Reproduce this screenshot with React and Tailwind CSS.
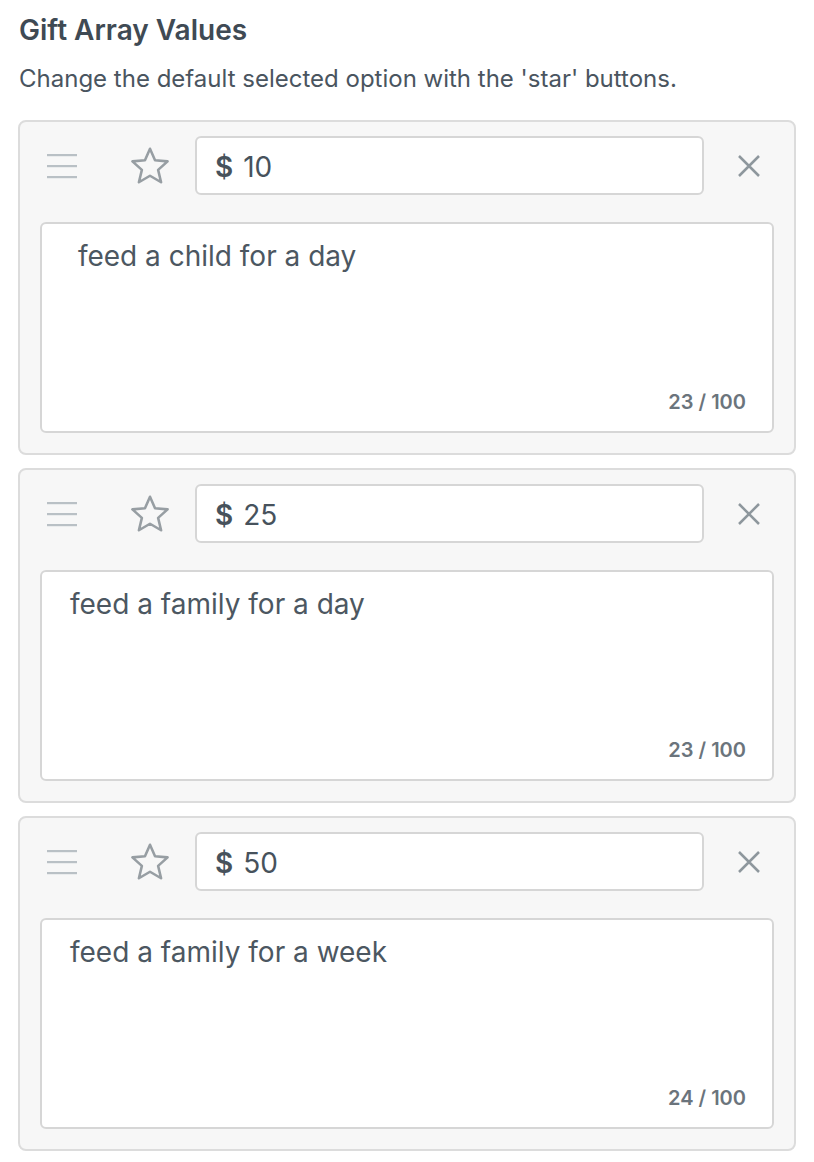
import React from "react";

const gifts = [
    { amount: "10", text: " feed a child for a day" },
    { amount: "25", text: "feed a family for a day" },
    { amount: "50", text: "feed a family for a week" },
];

function DragHandle() {
    return (
        <svg width="30" height="26" viewBox="0 0 30 26" className="text-[#b9c0c5]">
            <rect x="0" y="1" width="30" height="2.2" fill="currentColor" />
            <rect x="0" y="12" width="30" height="2.2" fill="currentColor" />
            <rect x="0" y="23" width="30" height="2.2" fill="currentColor" />
        </svg>
    );
}

function StarIcon() {
    return (
        <svg width="42" height="41" viewBox="0 0 24 24" fill="none" stroke="currentColor" strokeWidth="1.5" strokeLinejoin="round" className="text-[#979ea3]">
            <polygon points="12,2.2 14.94,8.96 22.3,9.6 16.75,14.55 18.49,21.8 12,18 5.51,21.8 7.25,14.55 1.7,9.6 9.06,8.96" />
        </svg>
    );
}

function CloseIcon() {
    return (
        <svg width="22" height="22" viewBox="0 0 22 22" fill="none" stroke="currentColor" strokeWidth="2.5" className="text-[#8e979d]">
            <path d="M1 1L21 21M21 1L1 21" />
        </svg>
    );
}

function GiftCard({ amount, text }) {
    return (
        <div className="border-2 border-[#dcdcdc] rounded-lg bg-[#f7f7f7] px-5 pt-[14px] pb-5">
            <div className="flex items-center h-[59px]">
                <div className="w-[87px] flex items-center pl-[7px]">
                    <DragHandle />
                </div>
                <div className="w-[68px] flex items-center pl-[2px]">
                    <StarIcon />
                </div>
                <div className="w-[509px] h-[59px] bg-white border-2 border-[#d6d6d6] rounded-md flex items-center pl-[18px] pt-[3px] text-[28px] text-[#47525c]">
                    <span className="font-semibold">$</span>
                    <span className="ml-[10px]">{amount}</span>
                </div>
                <div className="flex-1 flex items-center justify-center pl-5">
                    <CloseIcon />
                </div>
            </div>
            <div className="mt-[27px] h-[211px] bg-white border-2 border-[#d6d6d6] rounded-md flex flex-col pl-[28px] pr-[26px] pt-[14px] pb-[15px]">
                <div className="text-[28px] leading-[36px] text-[#4c5761] whitespace-pre">{text}</div>
                <div className="mt-auto text-right text-[20px] font-semibold text-[#6b747c] leading-[28px]">
                    {text.length} / 100
                </div>
            </div>
        </div>
    );
}

export default function App() {
    return (
        <main className="min-h-screen bg-white px-[18px] pt-[13px] font-['Inter',sans-serif]">
            <h1 className="text-[28px] leading-[34px] font-semibold text-[#3f4a54] pl-[1px]">Gift Array Values</h1>
            <p className="mt-[17px] text-[24px] leading-[30px] text-[#4a555f] pl-[1px]">
                Change the default selected option with the 'star' buttons.
            </p>
            <div className="mt-[26px] w-[778px] flex flex-col gap-[13px]">
                {gifts.map((g) => (
                    <GiftCard key={g.amount} amount={g.amount} text={g.text} />
                ))}
            </div>
        </main>
    );
}
